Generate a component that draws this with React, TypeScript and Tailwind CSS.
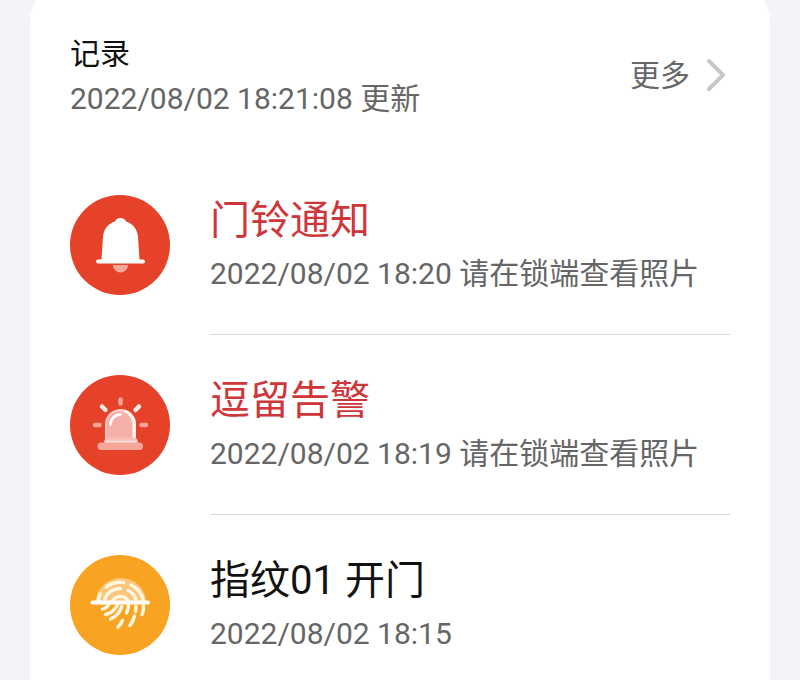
import type { ReactNode } from 'react';

type RecordItem = {
  id: number;
  title: string;
  time: string;
  note?: string;
  alert: boolean;
  icon: ReactNode;
};

const BellIcon = () => (
  <svg viewBox="0 0 100 100" className="size-full" aria-hidden="true">
    <path d="M43 70h15a7.500 7.500 0 0 1-15 0z" fill="#f9a79b" />
    <path
      d="M50.500 23c2.600 0 4.700 1.400 5.600 3.600C63.500 29 67.500 35 68 42l1.500 22.500H73a2 2 0 0 1 0 4H28a2 2 0 0 1 0-4h3.500L33 42c.500-7 4.500-13 11.900-15.400.900-2.200 3-3.600 5.600-3.600z"
      fill="#fff"
    />
  </svg>
);

const SirenIcon = () => (
  <svg viewBox="0 0 100 100" className="size-full" aria-hidden="true">
    <g strokeWidth="4.500" strokeLinecap="round" fill="none">
      <path d="M50.500 24.500v4M25 50h4.500M71.500 50H76" stroke="#f8a598" />
      <path d="M32 31.500l3.500 3.500M69 31.500L65.500 35" stroke="#fdeae2" />
    </g>
    <path d="M35 65V49.500a15.500 15.500 0 0 1 31 0V65z" fill="#fbd0c9" />
    <path d="M54 34.500a15.500 15.500 0 0 1 12 15V65h-6z" fill="#fff3ee" />
    <path d="M36.500 65V49.500a13 13 0 0 1 26 0V65z" fill="#f5b0aa" />
    <path d="M40.500 49.500a10 10 0 0 1 10-10" stroke="#fff" strokeWidth="2.500" strokeLinecap="round" fill="none" />
    <path d="M34 69c0-4 1-6.500 4-6.500h26c3 0 4 2.500 4 6.500z" fill="#f9c0b8" />
    <rect x="27.500" y="67.500" width="45.500" height="7.500" rx="3.500" fill="#f8a59a" />
    <path d="M36 66.500h30" stroke="#fde3dd" strokeWidth="1.500" strokeLinecap="round" />
  </svg>
);

const FingerprintIcon = () => (
  <svg viewBox="0 0 100 100" className="size-full" aria-hidden="true">
    <path d="M26 47a25 24 0 0 1 50 0z" fill="#fbc67c" />
    <g stroke="#fff6e0" strokeWidth="3.500" strokeLinecap="round" fill="none">
      <path d="M36.500 32c4.500-3.500 10.500-5.200 17-4.500" />
      <path d="M61 30c6.500 3.200 11 9 12.500 16" />
      <path d="M30 39l-2 6 4 3" />
      <path d="M35 44c1.500-5.500 7.500-10.500 15.500-10.500" />
      <path d="M58 35.500c4.500 2 7.500 6 8 10.500" />
      <path d="M42 47c1.500-3.500 5-5.500 9-5.500s7.500 3 7.500 7c0 3.500-.500 6.500-2 9.500" />
      <path d="M32.500 54c3-.500 5-2 6.500-5" />
      <path d="M35.500 59.500c6-1.300 9.500-4.500 12-9.500" />
      <path d="M40.500 64c5.500-2.500 9.500-6.500 11.300-12.500" />
      <path d="M52.500 65.500c-1 2.200-2.500 4.500-4.500 6.500" />
      <path d="M64.500 61c-.800 3.500-2.300 6.500-4.500 9.500" />
      <path d="M66 51.500c0 2 0 3.500-.500 5" />
      <path d="M73.500 51c.200 3 0 5.500-1.500 8.500" />
    </g>
    <rect x="20.500" y="45.500" width="59.500" height="4" rx="2" fill="#fff" />
  </svg>
);

const records: RecordItem[] = [
  { id: 1, title: '门铃通知', time: '2022/08/02 18:20', note: '请在锁端查看照片', alert: true, icon: <BellIcon /> },
  { id: 2, title: '逗留告警', time: '2022/08/02 18:19', note: '请在锁端查看照片', alert: true, icon: <SirenIcon /> },
  { id: 3, title: '指纹01 开门', time: '2022/08/02 18:15', alert: false, icon: <FingerprintIcon /> },
];

const RecordRow = ({ item }: { item: RecordItem }) => (
  <li className="group flex h-[180px] items-center gap-10">
    <div className={`size-[100px] shrink-0 rounded-full ${item.alert ? 'bg-[#e64129]' : 'bg-[#f9a323]'}`}>
      {item.icon}
    </div>
    <div className="flex h-full min-w-0 flex-1 flex-col justify-center border-b border-[#d9d9d9] pt-[2px] group-last:border-transparent">
      <h3 className={`text-[40px] leading-[56px] ${item.alert ? 'text-[#d0353a]' : 'text-[#111111]'}`}>{item.title}</h3>
      <p className="text-[30px] leading-[50px] whitespace-nowrap text-[#666666]">
        {item.time} {item.note}
      </p>
    </div>
  </li>
);

const App = () => {
  return (
    <main
      lang="zh-CN"
      className="h-screen overflow-hidden bg-[#f2f4f7] px-[30px] font-['Roboto','Noto_Sans_CJK_SC',sans-serif]"
    >
      <section className="-mt-3 rounded-[32px] bg-white px-10 pt-3 pb-6">
        <header className="flex h-[155px] items-start justify-between pt-[31px]">
          <div className="text-[30px] leading-[45px]">
            <h2 className="text-[#111111]">记录</h2>
            <p className="text-[#666666]">2022/08/02 18:21:08 更新</p>
          </div>
          <button type="button" className="flex h-[88px] items-center gap-4 text-[30px] text-[#666666]">
            更多
            <svg viewBox="0 0 24 36" className="h-9 w-6" fill="none" stroke="#c8c8c8" strokeWidth="4" strokeLinecap="round" strokeLinejoin="round" aria-hidden="true">
              <path d="M3 4l14 14L3 32" />
            </svg>
          </button>
        </header>
        <ul>
          {records.map((r) => (
            <RecordRow key={r.id} item={r} />
          ))}
        </ul>
      </section>
    </main>
  );
};

export default App;
